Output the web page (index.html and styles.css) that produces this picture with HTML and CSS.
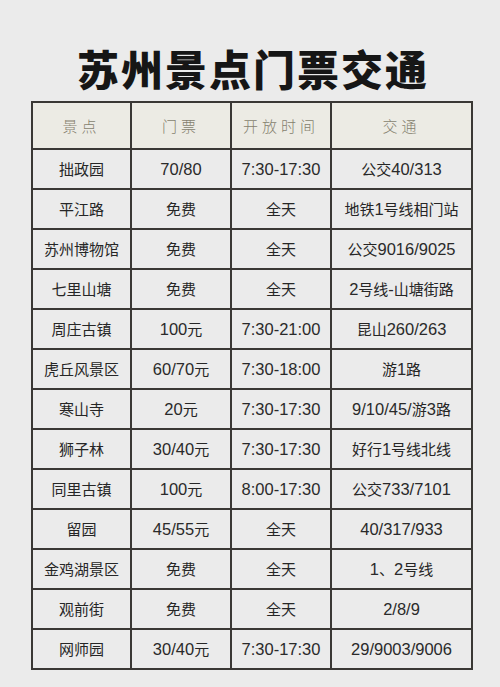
FILE: index.html
```html
<!DOCTYPE html>
<html lang="zh-CN">
<head>
<meta charset="utf-8">
<link rel="stylesheet" href="styles.css">
</head>
<body>
<div class="page">
  <h1 class="title">苏州景点门票交通</h1>
  <table class="grid">
    <colgroup>
      <col class="c1"><col class="c2"><col class="c3"><col class="c4">
    </colgroup>
    <thead>
      <tr><th>景点</th><th>门票</th><th>开放时间</th><th>交通</th></tr>
    </thead>
    <tbody>
      <tr><td>拙政园</td><td><span class="n">70/80</span></td><td><span class="n">7:30-17:30</span></td><td>公交<span class="n">40/313</span></td></tr>
      <tr><td>平江路</td><td>免费</td><td>全天</td><td>地铁<span class="n">1</span>号线相门站</td></tr>
      <tr><td>苏州博物馆</td><td>免费</td><td>全天</td><td>公交<span class="n">9016/9025</span></td></tr>
      <tr><td>七里山塘</td><td>免费</td><td>全天</td><td><span class="n">2</span>号线<span class="n">-</span>山塘街路</td></tr>
      <tr><td>周庄古镇</td><td><span class="n">100</span>元</td><td><span class="n">7:30-21:00</span></td><td>昆山<span class="n">260/263</span></td></tr>
      <tr><td>虎丘风景区</td><td><span class="n">60/70</span>元</td><td><span class="n">7:30-18:00</span></td><td>游<span class="n">1</span>路</td></tr>
      <tr><td>寒山寺</td><td><span class="n">20</span>元</td><td><span class="n">7:30-17:30</span></td><td><span class="n">9/10/45/</span>游<span class="n">3</span>路</td></tr>
      <tr><td>狮子林</td><td><span class="n">30/40</span>元</td><td><span class="n">7:30-17:30</span></td><td>好行<span class="n">1</span>号线北线</td></tr>
      <tr><td>同里古镇</td><td><span class="n">100</span>元</td><td><span class="n">8:00-17:30</span></td><td>公交<span class="n">733/7101</span></td></tr>
      <tr><td>留园</td><td><span class="n">45/55</span>元</td><td>全天</td><td><span class="n">40/317/933</span></td></tr>
      <tr><td>金鸡湖景区</td><td>免费</td><td>全天</td><td><span class="n">1</span>、<span class="n">2</span>号线</td></tr>
      <tr><td>观前街</td><td>免费</td><td>全天</td><td><span class="n">2/8/9</span></td></tr>
      <tr><td>网师园</td><td><span class="n">30/40</span>元</td><td><span class="n">7:30-17:30</span></td><td><span class="n">29/9003/9006</span></td></tr>
    </tbody>
  </table>
</div>
</body>
</html>
```

FILE: styles.css
```css
html, body {
  margin: 0;
  padding: 0;
  background: #ebebeb;
}
.page {
  width: 500px;
  height: 687px;
  padding-top: 44px;
  box-sizing: border-box;
  font-family: "Noto Sans CJK SC", sans-serif;
}
.title {
  margin: 0 0 10px 0;
  text-align: center;
  font-size: 42px;
  line-height: 47px;
  font-weight: 900;
  letter-spacing: 2px;
  color: #161616;
  padding-left: 6px;
}
.grid {
  margin-left: 31px;
  border-collapse: collapse;
  table-layout: fixed;
  width: 440px;
}
.c1 { width: 99px; }
.c2 { width: 100px; }
.c3 { width: 100px; }
.c4 { width: 141px; }
.grid th, .grid td {
  border: 2px solid #3a3835;
  padding: 0;
  text-align: center;
}
.grid th {
  height: 45px;
  background: #ecebe4;
  font-weight: 300;
  font-size: 15px;
  letter-spacing: 4px;
  color: #857f6e;
}
.grid td {
  height: 38px;
  font-size: 15px;
  line-height: 20px;
  color: #262626;
  background: #ebebeb;
  font-family: "Noto Sans CJK SC", sans-serif;
}
.n {
  font-family: "Liberation Sans", sans-serif;
  font-size: 16.5px;
  color: #2a2a2a;
}
```
